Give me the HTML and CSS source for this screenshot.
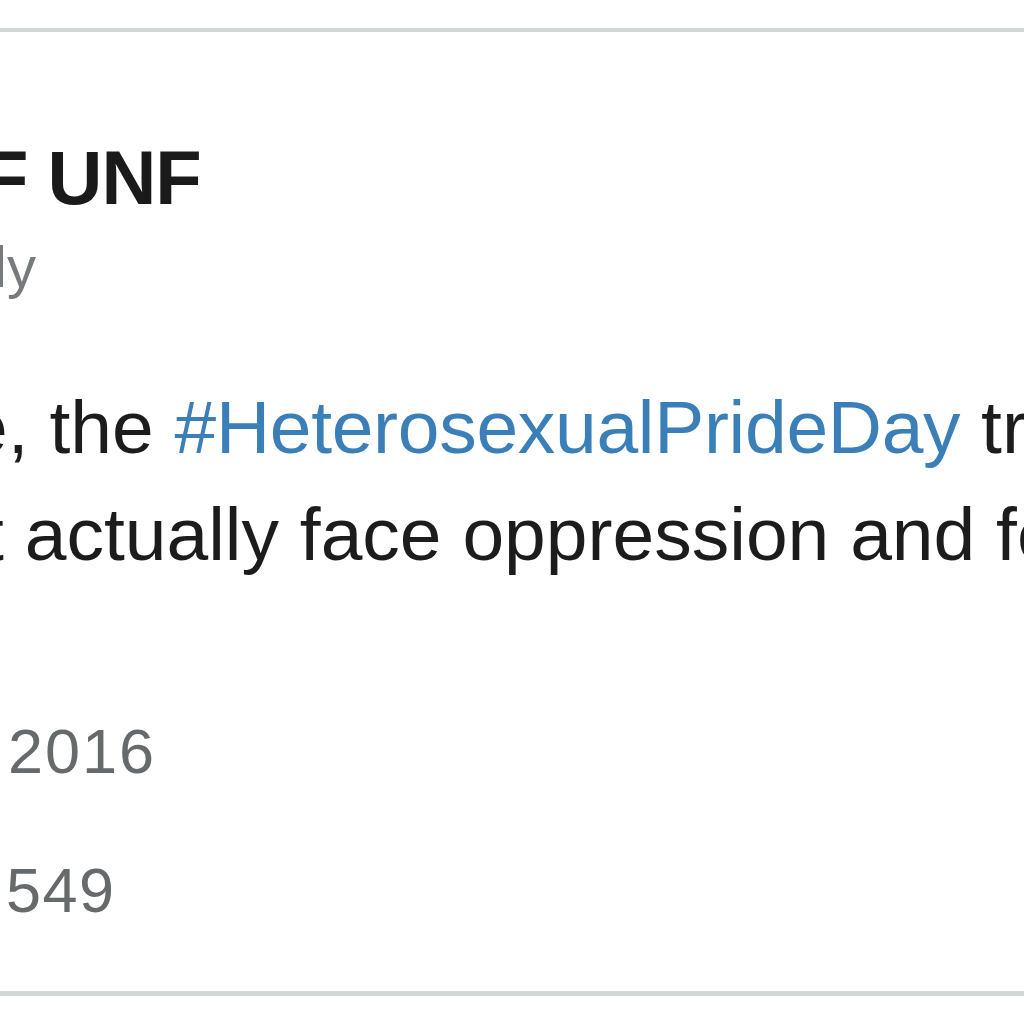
FILE: index.html
```html
<!DOCTYPE html>
<html lang="en">
<head>
<meta charset="utf-8">
<title>Tweet</title>
<link rel="stylesheet" href="styles.css">
</head>
<body>
<div class="card">
  <div class="name">F UNF</div>
  <div class="handle">ly</div>
  <div class="text">
    <div class="line line1">e, the <a class="tag" href="#">#HeterosexualPrideDay</a> trends</div>
    <div class="line line2">t actually face oppression and feel</div>
  </div>
  <div class="date">2016</div>
  <div class="count">549</div>
</div>
</body>
</html>
```
FILE: styles.css
```css
html, body {
  margin: 0;
  padding: 0;
  background: #ffffff;
  overflow: hidden;
  width: 1024px;
  height: 1024px;
}
body {
  font-family: "Liberation Sans", Arial, sans-serif;
  padding-top: 28px;
  box-sizing: border-box;
}
.card {
  border-top: 4px solid #d0d5d6;
  border-bottom: 5px solid #d0d5d6;
  padding-top: 108px;
  padding-bottom: 69px;
  white-space: nowrap;
  overflow: hidden;
}
.name {
  font-weight: bold;
  font-size: 76px;
  line-height: 76px;
  letter-spacing: -1px;
  color: #1a1a1a;
  text-indent: -18px;
}
.handle {
  margin-top: 22px;
  font-size: 58px;
  line-height: 58px;
  color: #777b7e;
  text-indent: -6px;
}
.text {
  margin-top: 78px;
  font-size: 75px;
  line-height: 107px;
  color: #1c1c1c;
}
.line1 { text-indent: -34px; }
.line2 { text-indent: -17px; }
.tag {
  color: #3a7fb8;
  text-decoration: none;
  letter-spacing: -0.3px;
}
.date {
  margin-top: 132px;
  font-size: 63px;
  line-height: 63px;
  letter-spacing: 2px;
  color: #666a6d;
  padding-left: 8px;
}
.count {
  margin-top: 76px;
  font-size: 63px;
  line-height: 63px;
  letter-spacing: 1.5px;
  color: #666a6d;
  padding-left: 6px;
}
```
